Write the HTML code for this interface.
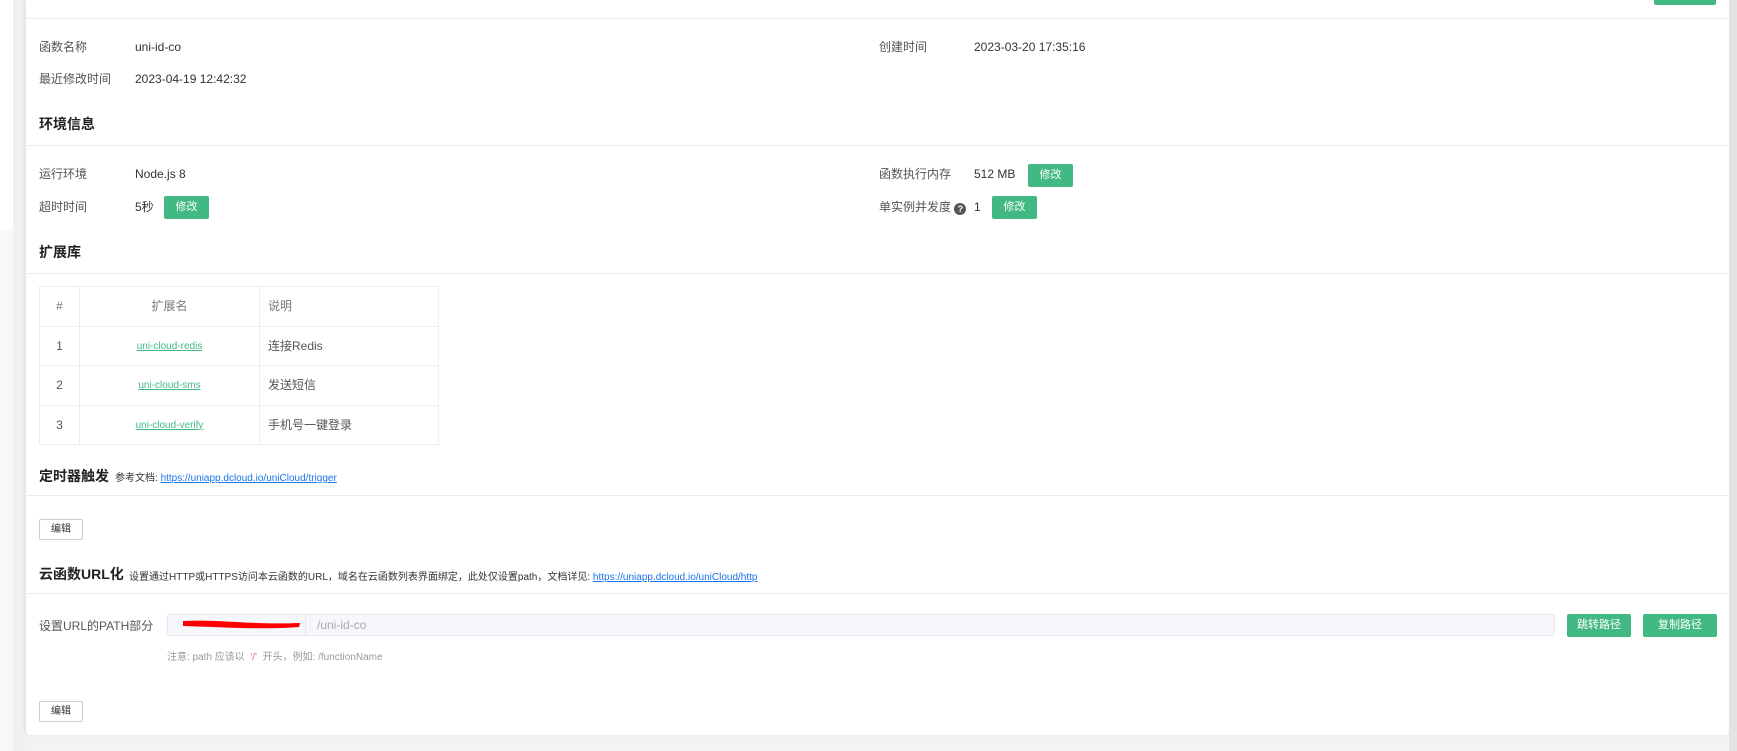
<!DOCTYPE html>
<html><head><meta charset="utf-8"><style>
*{margin:0;padding:0;box-sizing:border-box}
body{width:1737px;height:751px;overflow:hidden;background:#f3f3f3;font-family:"Liberation Sans","Noto Sans CJK SC",sans-serif;font-size:12px;color:#333;position:relative}
.side{position:absolute;left:0;top:0;width:13px;height:751px;background:#fff}
.side2{position:absolute;left:0;top:230px;width:13px;height:521px;background:#f7f8fa}
.strip{position:absolute;left:13px;top:0;width:12px;height:751px;background:#f0f0f0}
.card{position:absolute;left:26px;top:0;width:1703px;height:735px;background:#fff;box-shadow:-2px 0 3px rgba(0,0,0,.06);border-radius:0 0 4px 4px}
.sb{position:absolute;left:1729px;top:0;width:8px;height:751px;background:#e3e3e3}
.a{position:absolute;white-space:nowrap;line-height:16px;height:16px}
.line{position:absolute;left:26px;width:1703px;height:1px;background:#ebebeb}
.lbl{color:#555}
.h{font-weight:bold;font-size:14px;color:#222}
.btn{position:absolute;background:#42b983;color:#fff;border-radius:2px;font-size:11px;text-align:center;line-height:23px;height:23px}
.wbtn{position:absolute;border:1px solid #ccc;background:#fff;border-radius:2px;font-size:10px;text-align:center;line-height:19px;width:44px;height:21px;color:#333}
table{position:absolute;left:39px;top:286px;border-collapse:collapse;width:400px}
td{border:1px solid #ebeef5;height:39.5px;text-align:center;font-size:12px;color:#555;line-height:16px}
td.l{text-align:left;padding-left:8px}
tr:first-child td{color:#777}
a{color:#42b983;font-size:10px;text-decoration:underline}
.lk{color:#1a73e8;text-decoration:underline;font-size:10px}
</style></head><body>
<div class="side"></div><div class="side2"></div><div class="strip"></div>
<div class="card"></div><div class="sb"></div>
<div class="btn" style="left:1654px;top:-18px;width:62px"></div>
<div class="line" style="top:18px"></div>
<div class="a lbl" style="left:39px;top:39px">函数名称</div>
<div class="a" style="left:135px;top:39px">uni-id-co</div>
<div class="a lbl" style="left:879px;top:39px">创建时间</div>
<div class="a" style="left:974px;top:39px">2023-03-20 17:35:16</div>
<div class="a lbl" style="left:39px;top:71px">最近修改时间</div>
<div class="a" style="left:135px;top:71px">2023-04-19 12:42:32</div>
<div class="a h" style="left:39px;top:116px">环境信息</div>
<div class="line" style="top:145px"></div>
<div class="a lbl" style="left:39px;top:166px">运行环境</div>
<div class="a" style="left:135px;top:166px">Node.js 8</div>
<div class="a lbl" style="left:879px;top:166px">函数执行内存</div>
<div class="a" style="left:974px;top:166px">512 MB</div>
<div class="btn" style="left:1028px;top:164px;width:45px">修改</div>
<div class="a lbl" style="left:39px;top:199px">超时时间</div>
<div class="a" style="left:135px;top:199px">5秒</div>
<div class="btn" style="left:164px;top:196px;width:45px">修改</div>
<div class="a lbl" style="left:879px;top:199px">单实例并发度 <span style="display:inline-block;width:12px;height:12px;border-radius:6px;background:#555;color:#fff;font-size:9px;text-align:center;line-height:12px;font-weight:bold;vertical-align:-1px">?</span></div>
<div class="a" style="left:974px;top:199px">1</div>
<div class="btn" style="left:992px;top:196px;width:45px">修改</div>
<div class="a h" style="left:39px;top:244px">扩展库</div>
<div class="line" style="top:273px"></div>
<table>
<tr><td style="width:40px">#</td><td style="width:180px">扩展名</td><td class="l">说明</td></tr>
<tr><td>1</td><td><a>uni-cloud-redis</a></td><td class="l">连接Redis</td></tr>
<tr><td>2</td><td><a>uni-cloud-sms</a></td><td class="l">发送短信</td></tr>
<tr><td>3</td><td><a>uni-cloud-verify</a></td><td class="l">手机号一键登录</td></tr>
</table>
<div class="a h" style="left:39px;top:468px">定时器触发</div>
<div class="a" style="left:115px;top:471px;font-size:10px">参考文档: <span class="lk">https://uniapp.dcloud.io/uniCloud/trigger</span></div>
<div class="line" style="top:495px"></div>
<div class="wbtn" style="left:39px;top:519px">编辑</div>
<div class="a h" style="left:39px;top:566px">云函数URL化</div>
<div class="a" style="left:129px;top:570px;font-size:10px">设置通过HTTP或HTTPS访问本云函数的URL，域名在云函数列表界面绑定，此处仅设置path，文档详见: <span class="lk">https://uniapp.dcloud.io/uniCloud/http</span></div>
<div class="line" style="top:593px"></div>
<div class="a lbl" style="left:39px;top:618px">设置URL的PATH部分</div>
<div class="a" style="left:167px;top:614px;width:1388px;height:22px;border:1px solid #e4e7ed;background:#f5f7fa;border-radius:3px"></div>
<div class="a" style="left:305px;top:615px;width:1px;height:20px;background:#e4e7ed"></div>
<svg class="a" style="left:180px;top:617px;height:14px" width="125" height="14"><path d="M3 4 C40 2 70 8 120 6 L119 10 C80 13 40 10 3 9Z" fill="#f00"/></svg>
<div class="a" style="left:317px;top:617px;color:#aaa">/uni-id-co</div>
<div class="btn" style="left:1567px;top:614px;width:64px">跳转路径</div>
<div class="btn" style="left:1643px;top:614px;width:74px">复制路径</div>
<div class="a" style="left:167px;top:650px;font-size:10px;color:#999">注意: path 应该以 <span style="color:#f56c6c">&nbsp;'/'&nbsp;</span> 开头，例如: /functionName</div>
<div class="wbtn" style="left:39px;top:701px">编辑</div>
</body></html>
